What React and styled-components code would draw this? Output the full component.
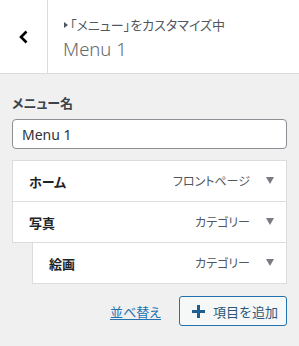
import React from "react";
import styled, { createGlobalStyle } from "styled-components";

const Global = createGlobalStyle`
  html, body { margin: 0; padding: 0; background: #f0f0f1; }
  body {
    font-family: "Noto Sans", "Noto Sans CJK JP", sans-serif;
    font-feature-settings: "palt" 1;
    color: #1d2327;
    width: 299px;
    height: 346px;
    overflow: hidden;
  }
  * { box-sizing: border-box; }
`;

const Panel = styled.div`
  width: 299px;
  min-height: 346px;
  background: #f0f0f1;
`;

const Header = styled.header`
  display: flex;
  height: 74px;
  background: #fff;
  border-bottom: 1px solid #dcdcde;
`;

const BackButton = styled.button`
  width: 48px;
  height: 100%;
  border: 0;
  border-right: 1px solid #dcdcde;
  background: #fff;
  display: flex;
  align-items: center;
  justify-content: center;
  padding: 0;
  cursor: pointer;
`;

const TitleBox = styled.div`
  display: flex;
  flex-direction: column;
  padding: 16px 0 0 15px;
`;

const Crumb = styled.span`
  display: flex;
  align-items: center;
  font-size: 13px;
  line-height: 18px;
  color: #50575e;
`;

const CrumbArrow = styled.span`
  width: 0;
  height: 0;
  border-top: 3.5px solid transparent;
  border-bottom: 3.5px solid transparent;
  border-left: 4px solid #50575e;
  margin: 0 2px 0 1px;
`;

const Title = styled.h3`
  margin: 2px 0 0;
  font-size: 18.5px;
  line-height: 26px;
  font-weight: 300;
  color: #646970;
`;

const Body = styled.div`
  padding: 19px 12px 0;
`;

const Label = styled.label`
  display: block;
  font-size: 13px;
  font-weight: 700;
  line-height: 20px;
  color: #3c434a;
  margin-bottom: 6px;
`;

const Input = styled.input`
  display: block;
  width: 100%;
  height: 30px;
  border: 1px solid #8c8f94;
  border-radius: 4px;
  padding: 0 9px;
  font-family: inherit;
  font-size: 14px;
  color: #2c3338;
  background: #fff;
  outline: none;
`;

const List = styled.ul`
  list-style: none;
  margin: 11px 0 0;
  padding: 0;
`;

const Item = styled.li`
  display: flex;
  align-items: center;
  height: 42px;
  margin-left: ${(p) => p.$depth * 20}px;
  margin-top: ${(p) => (p.$first ? 0 : -1)}px;
  padding: 0 12px 0 16px;
  background: #fff;
  border: 1px solid #dcdcde;
`;

const ItemTitle = styled.span`
  flex: 1;
  font-size: 13px;
  font-weight: 700;
  color: #1d2327;
`;

const ItemType = styled.span`
  font-size: 12px;
  color: #50575e;
  margin-right: 16px;
`;

const Toggle = styled.span`
  width: 0;
  height: 0;
  border-left: 4px solid transparent;
  border-right: 4px solid transparent;
  border-top: 7px solid #787c82;
  margin-top: -2px;
`;

const Actions = styled.div`
  display: flex;
  justify-content: flex-end;
  align-items: center;
  gap: 18px;
  margin-top: 12px;
`;

const Link = styled.a`
  font-size: 13px;
  color: #2271b1;
  text-decoration: underline;
  text-underline-offset: 2px;
`;

const AddButton = styled.button`
  display: flex;
  align-items: center;
  gap: 8px;
  height: 30px;
  width: 108px;
  padding: 0 0 0 12px;
  border: 1px solid #2271b1;
  border-radius: 3px;
  background: #f6f7f7;
  font-family: inherit;
  font-size: 13px;
  color: #2c5677;
  cursor: pointer;
`;

const items = [
  { title: "ホーム", type: "フロントページ", depth: 0 },
  { title: "写真", type: "カテゴリー", depth: 0 },
  { title: "絵画", type: "カテゴリー", depth: 1 },
];

export default function App() {
  return (
    <Panel>
      <Global />
      <Header>
        <BackButton aria-label="戻る">
          <svg width="14" height="16" viewBox="0 0 14 16">
            <polyline
              points="9.5,2.5 4,8 9.5,13.5"
              fill="none"
              stroke="#000"
              strokeWidth="2.6"
            />
          </svg>
        </BackButton>
        <TitleBox>
          <Crumb>
            <CrumbArrow />
            「メニュー」をカスタマイズ中
          </Crumb>
          <Title>Menu 1</Title>
        </TitleBox>
      </Header>
      <Body>
        <Label htmlFor="menu-name">メニュー名</Label>
        <Input id="menu-name" defaultValue="Menu 1" />
        <List>
          {items.map((it, i) => (
            <Item key={it.title} $depth={it.depth} $first={i === 0}>
              <ItemTitle>{it.title}</ItemTitle>
              <ItemType>{it.type}</ItemType>
              <Toggle />
            </Item>
          ))}
        </List>
        <Actions>
          <Link href="#">並べ替え</Link>
          <AddButton>
            <svg width="13" height="13" viewBox="0 0 13 13">
              <path d="M5 0h3v5h5v3H8v5H5V8H0V5h5z" fill="#1e5f8f" />
            </svg>
            項目を追加
          </AddButton>
        </Actions>
      </Body>
    </Panel>
  );
}
